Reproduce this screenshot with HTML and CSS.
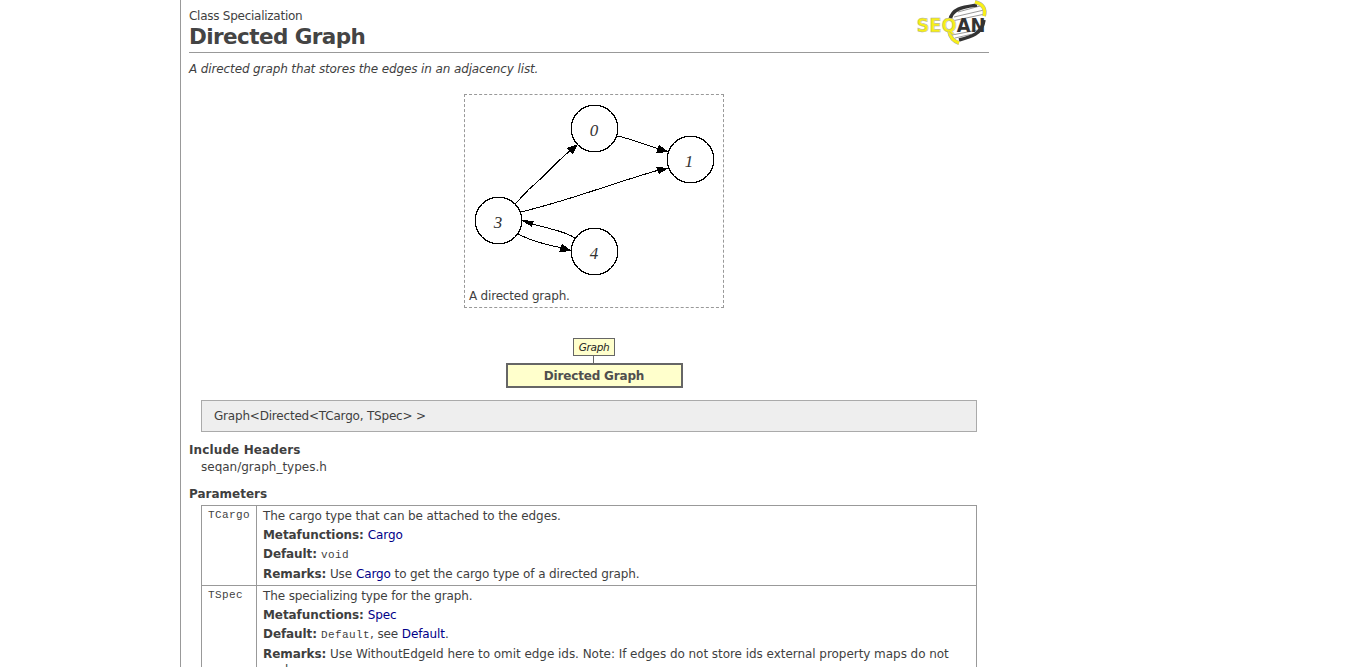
FILE: index.html
```html
<!DOCTYPE html>
<html lang="en">
<head>
<meta charset="utf-8">
<title>Directed Graph</title>
<link rel="stylesheet" href="styles.css">
</head>
<body>
<main class="page">
  <header class="header">
    <div>
      <div class="category">Class Specialization</div>
      <h1 class="title">Directed Graph</h1>
    </div>
    <svg class="logo" width="74" height="46" viewBox="0 0 74 46">
      <path d="M43 12L65 6M39 17L69 10M37 21L70 14M40 38L62 33M37 35L68 29M45 9L60 5" stroke="#999" stroke-width="1" fill="none"/>
      <path d="M35 20C37 8 49 7 62 5M44 40C56 37 67 34 69 20" stroke="#333" stroke-width="3.500" fill="none"/>
      <path d="M60 2C68 4 71 9 69 16M34 31C35 37 38 41 44 43" stroke="#aaa" stroke-width="4" fill="none"/>
      <path d="M60 2C68 4 71 9 69 16M34 31C35 37 38 41 44 43" stroke="#f7ef18" stroke-width="3" fill="none"/>
      <text class="logo-text" x="1.500" y="32" textLength="69" lengthAdjust="spacingAndGlyphs">SEQ<tspan class="logo-an">AN</tspan></text>
    </svg>
  </header>
  <p class="summary">A directed graph that stores the edges in an adjacency list.</p>
  <figure class="figure">
    <svg class="graph" width="250" height="190" viewBox="0 0 250 190" shape-rendering="crispEdges">
      <g class="nodes">
        <circle cx="125.500" cy="33.500" r="23.300"/><circle cx="221.500" cy="64.500" r="23.300"/>
        <circle cx="29.500" cy="125.500" r="23.300"/><circle cx="125.500" cy="156.500" r="23.300"/>
        <path d="M148 41C160 43 173 49 190 54M46 109C57 98 57 96 66 89C85 72 87 67 102 55M52 117C105 104 138 90 190 75M106 143C94 135 79 134 60 128M49 139C62 146 78 150 93 153"/>
      </g>
      <g class="arrows">
        <path d="M200 57L187 58L190 50Z"/><path d="M109 49L104 59L97 53Z"/><path d="M200 73L190 79L187 72Z"/>
        <path d="M52 125L65 126L63 132Z"/><path d="M103 156L90 157L93 149Z"/>
      </g>
      <g class="labels"><text x="125" y="41">0</text><text x="220" y="72">1</text><text x="29" y="133">3</text><text x="125" y="164">4</text></g>
    </svg>
    <figcaption>A directed graph.</figcaption>
  </figure>
  <div class="tree">
    <div class="parent">Graph</div>
    <div class="connector"></div>
    <div class="current">Directed Graph</div>
  </div>
  <div class="signature">Graph&lt;Directed&lt;TCargo, TSpec&gt; &gt;</div>
  <h2 class="heading include-heading">Include Headers</h2>
  <div class="include">seqan/graph_types.h</div>
  <h2 class="heading">Parameters</h2>
  <div class="params">
    <div class="name">TCargo</div>
    <div class="desc">
      <p>The cargo type that can be attached to the edges.</p>
      <p><b>Metafunctions:</b> <a>Cargo</a></p>
      <p><b>Default:</b> <code>void</code></p>
      <p><b>Remarks:</b> Use <a>Cargo</a> to get the cargo type of a directed graph.</p>
    </div>
    <div class="name">TSpec</div>
    <div class="desc">
      <p>The specializing type for the graph.</p>
      <p><b>Metafunctions:</b> <a>Spec</a></p>
      <p><b>Default:</b> <code>Default</code>, see <a>Default</a>.</p>
      <p class="long"><b>Remarks:</b> Use WithoutEdgeId here to omit edge ids. Note: If edges do not store ids external property maps do not work.</p>
    </div>
  </div>
</main>
</body>
</html>
```
FILE: styles.css
```css
* { box-sizing: border-box; }
html { overflow: hidden; }
body { margin: 0; height: 667px; overflow: hidden; background: #fff; color: #3f3f3f; font: 12px/16px Verdana, "DejaVu Sans", sans-serif; }
p, h1, h2, figure { margin: 0; }
.page { margin-left: 180px; width: 809px; min-height: 700px; padding-left: 8px; border-left: 1px solid #999; }
.header { display: flex; justify-content: space-between; height: 53px; padding-top: 8px; border-bottom: 1px solid #999; }
.category { letter-spacing: -.26px; }
.title { font-size: 21.500px; line-height: 26px; letter-spacing: -.58px; color: #444; }
.logo { margin-top: -8px; }
.logo-text { font: bold 20px "DejaVu Sans", sans-serif; fill: #f7ef18; stroke: #aaa; stroke-width: .5px; }
.logo-an { fill: #333; stroke: none; }
.summary { padding-top: 8px; font-style: italic; letter-spacing: -.12px; }
.figure { width: 260px; height: 214px; margin: 17px auto 30px 275px; padding: 0 4px; border: 1px dashed #999; }
.graph { display: block; height: 190px; margin-bottom: 3px; }
figcaption { letter-spacing: -.2px; }
.nodes { fill: none; stroke: #000; stroke-width: 1.2px; }
.nodes path { stroke-width: 1px; }
.labels { font: italic 17px "Liberation Serif", serif; text-anchor: middle; fill: #333; }
.tree { display: flex; flex-direction: column; align-items: center; width: 800px; padding-left: 10px; }
.parent { width: 42px; height: 18px; border: 1px solid #666; background: #ffc; color: #222; font-size: 10.500px; font-style: italic; line-height: 17px; text-align: center; letter-spacing: -.3px; }
.connector { width: 1px; height: 7px; margin-right: 1px; background: #666; }
.current { width: 177px; height: 25px; border: 2px solid #666; background: #ffc; color: #4f4f4f; font-weight: bold; line-height: 22px; text-align: center; letter-spacing: -.18px; }
.signature { height: 32px; margin: 12px 12px 10px; padding: 0 12px; border: 1px solid #aaa; background: #eee; line-height: 30px; letter-spacing: -.2px; }
.heading { font-size: 12px; line-height: 16px; }
.include-heading { letter-spacing: .12px; }
.include { margin: 1px 12px 11px; }
.params { display: grid; grid-template-columns: 55px 1fr; width: 776px; margin: 3px 0 0 12px; border: solid #999; border-width: 1px 1px 0 0; }
.name, .desc { border: solid #999; border-width: 0 0 1px 1px; padding: 0 6px; }
.name { padding-top: 1px; font: 11px/16px "Courier New", "Liberation Mono", monospace; letter-spacing: .4px; }
.desc { padding-top: 2px; letter-spacing: -.11px; }
.desc p { line-height: 16px; margin-bottom: 3px; }
.desc p:nth-child(3) { margin-bottom: 4px; }
.desc p:last-child { margin-bottom: 0; padding-bottom: 3px; }
.desc .long { letter-spacing: -.045px; }
.desc b { letter-spacing: -.08px; }
.desc b + a, .desc b + code { margin-left: .3px; }
.desc code { font: 11px/12px "Courier New", "Liberation Mono", monospace; letter-spacing: .4px; }
.desc a { color: #008; }
```
